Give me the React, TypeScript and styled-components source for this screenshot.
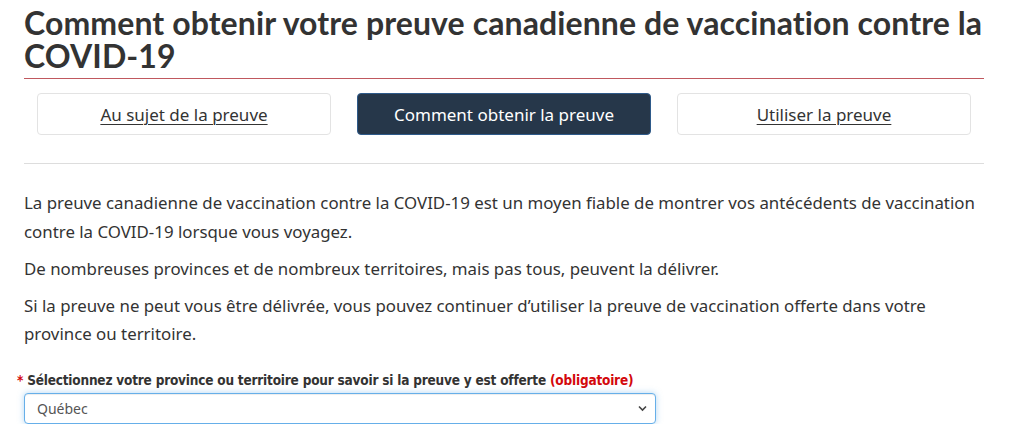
import React from "react";
import styled, { createGlobalStyle } from "styled-components";

const Global = createGlobalStyle`
  html, body { margin: 0; padding: 0; background: #fff; }
  body { font-family: "Noto Sans", "Open Sans", sans-serif; color: #333; }
  * { box-sizing: border-box; }
`;

const Page = styled.main`
  width: 960px;
  margin-left: 24px;
  padding-top: 6px;
`;

const Title = styled.h1`
  font-family: Lato, "Noto Sans", sans-serif;
  font-weight: 700;
  font-size: 32px;
  letter-spacing: 0.1px;
  line-height: 33px;
  color: #333;
  margin: 0;
  padding-bottom: 6px;
  border-bottom: 1px solid #c0585e;
`;

const Tabs = styled.nav`
  display: grid;
  grid-template-columns: repeat(3, 1fr);
  margin-top: 14px;
  padding-bottom: 28px;
  border-bottom: 1px solid #ddd;
`;

const Tab = styled.a<{ $active?: boolean }>`
  margin: 0 13px;
  height: 42px;
  display: flex;
  align-items: center;
  justify-content: center;
  border-radius: 4px;
  font-family: "Noto Sans", sans-serif;
  font-size: 17px;
  text-decoration: ${(p) => (p.$active ? "none" : "underline")};
  text-underline-offset: 3px;
  text-decoration-thickness: 1px;
  color: ${(p) => (p.$active ? "#fff" : "#333")};
  background: ${(p) => (p.$active ? "#26374a" : "#fff")};
  border: 1px solid ${(p) => (p.$active ? "#2e5a8a" : "#e3e3e3")};
`;

const Body = styled.section`
  padding-top: 25px;
`;

const Para = styled.p`
  font-size: 16.85px;
  line-height: 28.5px;
  margin: 0 0 8.5px;
  color: #333;
`;

const Field = styled.div`
  margin-top: 21px;
`;

const Label = styled.label`
  display: block;
  margin-left: -7px;
  font-family: "DejaVu Sans Condensed", "Liberation Sans Narrow", sans-serif;
  font-weight: 700;
  font-size: 13.5px;
  letter-spacing: -0.2px;
  line-height: 20px;
  color: #333;
`;

const Req = styled.span`
  color: #d3080c;
`;

const SelectWrap = styled.div`
  position: relative;
  width: 632px;
  margin-top: 3px;
`;

const Select = styled.select`
  display: block;
  width: 100%;
  height: 31px;
  padding: 0 30px 0 12px;
  appearance: none;
  font-family: "Noto Sans", sans-serif;
  font-size: 14px;
  color: #555;
  background: #fff;
  border: 1px solid #66afe9;
  border-radius: 4px;
  box-shadow: inset 0 1px 1px rgba(0, 0, 0, 0.075), 0 0 6px rgba(102, 175, 233, 0.5);
  outline: none;
`;

const Chevron = styled.svg`
  position: absolute;
  right: 9px;
  top: 12px;
  width: 9px;
  height: 7px;
  pointer-events: none;
`;

export default function App() {
  return (
    <>
      <Global />
      <Page>
        <Title>Comment obtenir votre preuve canadienne de vaccination contre la COVID-19</Title>
        <Tabs>
          <Tab href="#">Au sujet de la preuve</Tab>
          <Tab href="#" $active>Comment obtenir la preuve</Tab>
          <Tab href="#">Utiliser la preuve</Tab>
        </Tabs>
        <Body>
          <Para>
            La preuve canadienne de vaccination contre la COVID-19 est un moyen fiable de montrer vos antécédents de vaccination contre la COVID-19 lorsque vous voyagez.
          </Para>
          <Para>De nombreuses provinces et de nombreux territoires, mais pas tous, peuvent la délivrer.</Para>
          <Para>
            Si la preuve ne peut vous être délivrée, vous pouvez continuer d’utiliser la preuve de vaccination offerte dans votre province ou territoire.
          </Para>
          <Field>
            <Label htmlFor="prov">
              <Req>*</Req> Sélectionnez votre province ou territoire pour savoir si la preuve y est offerte <Req>(obligatoire)</Req>
            </Label>
            <SelectWrap>
              <Select id="prov" defaultValue="qc">
                <option value="qc">Québec</option>
              </Select>
              <Chevron viewBox="0 0 9 7">
                <path d="M1 1.5 L4.5 5 L8 1.5" fill="none" stroke="#444" strokeWidth="1.6" />
              </Chevron>
            </SelectWrap>
          </Field>
        </Body>
      </Page>
    </>
  );
}
